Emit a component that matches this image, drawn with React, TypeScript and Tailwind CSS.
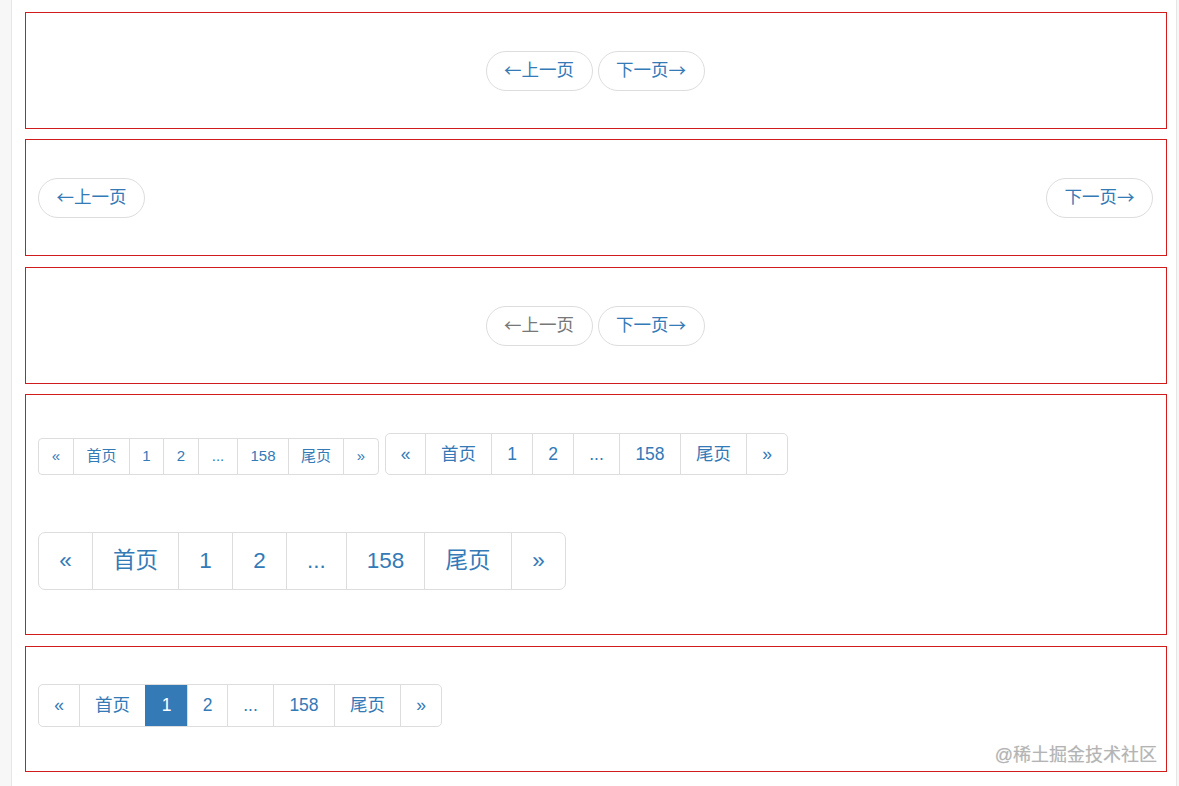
import React from "react";

const LABELS = ["«", "首页", "1", "2", "...", "158", "尾页", "»"];

interface PaginationProps {
  widths: number[];
  height: number;
  fontSize: string;
  radius: string;
  active?: number;
}

function Pagination({ widths, height, fontSize, radius, active = -1 }: PaginationProps) {
  return (
    <div
      className={`inline-flex overflow-hidden border border-[#ddd] bg-white ${radius}`}
      style={{ height }}
    >
      {LABELS.map((label, i) => (
        <span
          key={i}
          className={`flex items-center justify-center ${fontSize} ${i > 0 ? "border-l" : ""} ${
            i === active
              ? "border-[#337ab7] bg-[#337ab7] text-white"
              : "border-[#ddd] text-[#337ab7]"
          }`}
          style={{ width: widths[i] }}
        >
          {label}
        </span>
      ))}
    </div>
  );
}

// arrows come from the CJK font so they are full width, like the reference
function Arrow({ children }: { children: string }) {
  return <span className="font-['Noto_Sans_CJK_SC',sans-serif]">{children}</span>;
}

function PagerButton({ children, disabled = false }: { children: React.ReactNode; disabled?: boolean }) {
  return (
    <span
      className={`flex h-[40px] w-[107px] items-center justify-center rounded-full border border-[#ddd] bg-white text-[17.5px] ${
        disabled ? "text-[#777]" : "text-[#337ab7]"
      }`}
    >
      {children}
    </span>
  );
}

function Box({ children, className = "" }: { children: React.ReactNode; className?: string }) {
  return <div className={`relative w-[1142px] border border-[#d01c1c] ${className}`}>{children}</div>;
}

export default function App() {
  return (
    <div
      className="flex min-h-[786px] bg-[#f7f7f7]"
      style={{ fontFamily: '"Liberation Sans", "Noto Sans CJK SC", sans-serif' }}
    >
      <div className="ml-[11px] flex w-[1166px] flex-col border-x border-[#e6e6e6] bg-white pl-[13px] pt-[12px]">
        {/* pager centered */}
        <Box className="flex h-[117px] items-center justify-center gap-[5px] pr-[2px]">
          <PagerButton>
            <Arrow>←</Arrow>上一页
          </PagerButton>
          <PagerButton>
            下一页<Arrow>→</Arrow>
          </PagerButton>
        </Box>

        {/* pager aligned to edges */}
        <Box className="mt-[10px] flex h-[117px] items-center justify-between pl-[12px] pr-[13px]">
          <PagerButton>
            <Arrow>←</Arrow>上一页
          </PagerButton>
          <PagerButton>
            下一页<Arrow>→</Arrow>
          </PagerButton>
        </Box>

        {/* pager with disabled prev */}
        <Box className="mt-[11px] flex h-[117px] items-center justify-center gap-[5px] pr-[2px]">
          <PagerButton disabled>
            <Arrow>←</Arrow>上一页
          </PagerButton>
          <PagerButton>
            下一页<Arrow>→</Arrow>
          </PagerButton>
        </Box>

        {/* sizes */}
        <Box className="mt-[10px] h-[241px] pl-[12px] pt-[38px]">
          <div className="flex items-end gap-[6px]">
            <Pagination
              widths={[34, 56, 34, 35, 39, 51, 55, 35]}
              height={37}
              fontSize="text-[15px]"
              radius="rounded-[4px]"
            />
            <Pagination
              widths={[39, 66, 41, 41, 46, 61, 66, 41]}
              height={42}
              fontSize="text-[17.5px]"
              radius="rounded-[5px]"
            />
          </div>
          <div className="mt-[57px]">
            <Pagination
              widths={[53, 86, 54, 54, 60, 78, 87, 54]}
              height={58}
              fontSize="text-[22.5px]"
              radius="rounded-[7px]"
            />
          </div>
        </Box>

        {/* active page */}
        <Box className="mt-[11px] h-[126px] pl-[12px] pt-[37px]">
          <Pagination
            widths={[40, 66, 42, 40, 46, 61, 66, 41]}
            height={43}
            fontSize="text-[17.5px]"
            radius="rounded-[5px]"
            active={2}
          />
          <span className="absolute bottom-[7px] right-[9px] text-[18px] leading-none text-[#b4b4b4] [text-shadow:0_0_1px_rgba(0,0,0,0.15)]">
            @稀土掘金技术社区
          </span>
        </Box>
      </div>
    </div>
  );
}
